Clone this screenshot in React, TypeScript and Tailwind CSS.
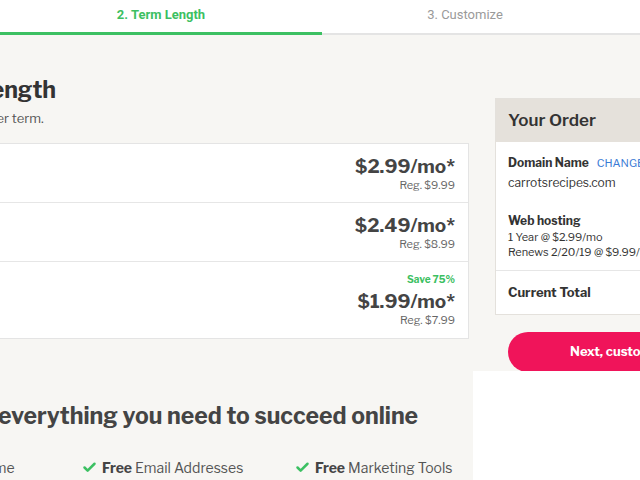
import { Check } from "lucide-react";

type Plan = {
  price: string;
  reg: string;
  save?: string;
};

const plans: Plan[] = [
  { price: "$2.99/mo*", reg: "Reg. $9.99" },
  { price: "$2.49/mo*", reg: "Reg. $8.99" },
  { price: "$1.99/mo*", reg: "Reg. $7.99", save: "Save 75%" },
];

const features = ["Domain Name", "Email Addresses", "Marketing Tools"];

function Tabs() {
  return (
    <div className="relative h-[35px] shrink-0 border-b-2 border-[#e4e4e4] bg-white">
      <div className="-ml-[295px] flex h-full font-['Liberation_Sans_Narrow','Roboto',sans-serif] text-[13px]">
        <div className="flex w-[304px] items-center justify-center pb-[3px] text-[#3cc062]">1. Domain</div>
        <div className="flex w-[304px] items-center justify-center pb-[3px] font-bold text-[#3cc062]">
          2. Term Length
        </div>
        <div className="flex w-[304px] items-center justify-center pb-[3px] text-[#9a9a9a]">3. Customize</div>
      </div>
      <div className="absolute -bottom-[2px] left-0 h-[3px] w-[322px] bg-[#3cc062]" />
    </div>
  );
}

function PlanRow({ plan, last }: { plan: Plan; last: boolean }) {
  return (
    <div className={`flex flex-col items-end pr-[13px] ${last ? "h-[76px] pt-[11px]" : "h-[59px] border-b border-[#e6e6e6] pt-[12px]"}`}>
      {plan.save && (
        <div className="mb-[6px] text-[10px] leading-[12px] font-bold text-[#3cc062]">{plan.save}</div>
      )}
      <div className="text-[19px] leading-[22px] font-bold text-[#444]">{plan.price}</div>
      <div className="text-[11px] leading-[14px] text-[#666]">{plan.reg}</div>
    </div>
  );
}

function OrderSummary() {
  return (
    <div className="w-[260px] shrink-0 pt-[63px]">
      <div className="border border-[#e4e1dc] bg-white">
        <div className="flex h-[43px] items-center bg-[#e5e1db] px-[12px] text-[17px] font-semibold text-[#333]">
          Your Order
        </div>
        <div className="px-[12px] pt-[12px] pb-[10px] text-[#333]">
          <div className="flex items-baseline gap-[8px]">
            <span className="text-[12px] font-bold">Domain Name</span>
            <span className="text-[11px] text-[#3a7bd5]">CHANGE</span>
          </div>
          <div className="mt-[2px] text-[12px]">carrotsrecipes.com</div>
          <div className="mt-[20px] text-[12px] font-bold">Web hosting</div>
          <div className="text-[11px] leading-[15px]">1 Year @ $2.99/mo</div>
          <div className="text-[11px] leading-[15px] whitespace-nowrap">Renews 2/20/19 @ $9.99/mo</div>
        </div>
        <div className="flex h-[44px] items-center border-t border-[#e6e6e6] px-[12px] text-[13px] font-bold text-[#333]">
          Current Total
        </div>
      </div>
      <button className="mt-[17px] ml-[13px] flex h-[40px] w-[224px] items-center justify-center rounded-full bg-[#f0145a] text-[13px] font-bold text-white">
        Next, customize
      </button>
    </div>
  );
}

export default function App() {
  return (
    <div className="relative flex h-[480px] w-[640px] flex-col overflow-hidden bg-[#f7f6f3] font-['Libre_Franklin','Liberation_Sans',sans-serif]">
      <Tabs />
      <div className="flex gap-[26px]">
        <div className="w-[469px] shrink-0">
          <div className="-ml-[230px] pt-[41px] whitespace-nowrap text-[#333]">
            <h1 className="text-[23px] leading-[28px] font-bold">Choose Your Term Length</h1>
            <p className="mt-[5px] text-[13px] text-[#555]">Save more on web hosting with a longer term.</p>
          </div>
          <div className="mt-[14px] border border-l-0 border-[#e4e4e4] bg-white">
            {plans.map((p, i) => (
              <PlanRow key={p.price} plan={p} last={i === plans.length - 1} />
            ))}
          </div>
          <h2 className="mt-[60px] -ml-[47px] text-[23px] font-bold whitespace-nowrap text-[#444]">
            Get everything you need to succeed online
          </h2>
          <div className="mt-[24px] -ml-[131px] flex whitespace-nowrap text-[14px] text-[#555]">
            {features.map((f) => (
              <div key={f} className="flex w-[213px] shrink-0 items-center gap-[5px]">
                <Check size={15} strokeWidth={4} className="text-[#3cc062]" />
                <span>
                  <b className="text-[#444]">Free</b> {f}
                </span>
              </div>
            ))}
          </div>
        </div>
        <OrderSummary />
      </div>
      <div className="absolute top-[371px] left-[473px] h-[109px] w-[167px] bg-white" />
    </div>
  );
}
